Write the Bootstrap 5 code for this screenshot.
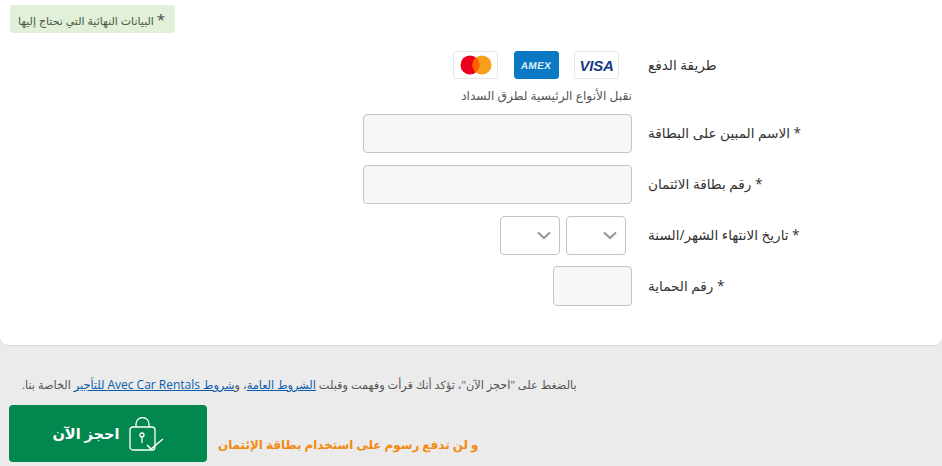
<!DOCTYPE html>
<html lang="ar" dir="rtl">
<head>
<meta charset="utf-8">
<title>الدفع</title>
<link href="https://cdn.jsdelivr.net/npm/bootstrap@5.3.0/dist/css/bootstrap.min.css" rel="stylesheet">
<style>
html,body{height:466px;overflow:hidden}
body{background:#ebebeb;font-family:"Open Sans","DejaVu Sans",sans-serif;color:#444;font-size:13px}
.pay-panel{background:#fff;height:345px;border-radius:0 0 8px 8px;box-shadow:0 1px 1px #d8d8d8;padding-top:5px}
.note-tag{background:#e2efd9;color:#4a5a40;font-size:11px;line-height:28px;height:28px;width:165px;border-radius:3px;margin-right:767px;padding-right:10px;white-space:nowrap}
.note-tag b{font-size:15px;font-weight:400;color:#444}
.form-line{display:flex;align-items:center;margin-bottom:12px}
.line-label{width:294px;text-align:left;font-size:13.6px;font-weight:400;color:#333;flex:none;margin:0 0 0 16px;white-space:nowrap}
.line-field{width:269px;flex:none}
.brand-row{height:28px;margin-top:18px;margin-bottom:0}
.brands{display:flex;gap:15px;padding-right:13px}
.brand{width:45px;height:28px;border:1px solid #e6e6e6;border-radius:3px;background:#fff;display:flex;align-items:center;justify-content:center;flex:none}
.brand:last-child{margin-right:1px}
.brand.amex{background:#0a78c2;border-color:#0a78c2}
.visa-word{font:italic 700 15px "Liberation Sans",sans-serif;color:#1a3a80;letter-spacing:-.2px}
.amex-word{font:700 10px "Liberation Sans",sans-serif;color:#dff0fb;letter-spacing:.3px;transform:skewX(-8deg)}
.brand-hint{font-size:12.2px;color:#555;width:269px;margin:7px 310px 9px 0;line-height:19px;white-space:nowrap;height:19px}
.plain-input{display:block;width:100%;height:39px;background:#f7f7f7;border:1px solid #c4c4c4;border-radius:4px;padding:0 8px}
.plain-input.short{width:79px;height:40px}
.pick-line{margin-bottom:11px}
.pick-pair{display:flex;gap:6px;padding-right:6px}
.month-pick,.year-pick{height:39px;width:60px;border:1px solid #c4c4c4;border-radius:4px;background:#fff;display:flex;align-items:center;justify-content:flex-start;padding-right:8px}
.lower{padding:32px 0 0}
.terms-line{font-size:11.3px;color:#555;margin:0;text-align:left;padding-left:22px;line-height:15px;white-space:nowrap;height:15px}
.terms-line a{color:#0b5cad}
.latin-name{font-size:12px}
.book-row{display:flex;flex-direction:row-reverse;justify-content:flex-start;align-items:flex-end;padding-left:9px;margin-top:13px;gap:11px}
.book-btn{width:198px;height:57px;background:#02874f;color:#fff;border:0;border-radius:4px;font-size:14.6px;font-weight:700;display:flex;align-items:center;justify-content:center;gap:9px;padding:0}
.no-fee{color:#f28a10;font-size:11.9px;font-weight:700;white-space:nowrap;margin-bottom:8px}
</style>
</head>
<body>
<section class="pay-panel">
  <div class="note-tag"><b>*</b> البيانات النهائية التي نحتاج إليها</div>
  <div class="form-line brand-row">
    <div class="line-label">طريقة الدفع</div>
    <div class="line-field">
      <div class="brands">
        <div class="brand"><span class="visa-word" dir="ltr">VISA</span></div>
        <div class="brand amex"><span class="amex-word" dir="ltr">AMEX</span></div>
        <div class="brand">
          <svg width="32" height="20" viewBox="0 0 32 20"><circle cx="10" cy="10" r="9.5" fill="#eb001b"/><circle cx="22" cy="10" r="9.5" fill="#f79e1b"/><path d="M16 2.6a9.5 9.5 0 0 1 0 14.8a9.5 9.5 0 0 1 0-14.8z" fill="#ff5f00"/></svg>
        </div>
      </div>
    </div>
  </div>
  <p class="brand-hint">نقبل الأنواع الرئيسية لطرق السداد</p>
  <div class="form-line">
    <label class="line-label">* الاسم المبين على البطاقة</label>
    <div class="line-field"><input class="plain-input" type="text" aria-label="الاسم"></div>
  </div>
  <div class="form-line">
    <label class="line-label">* رقم بطاقة الائتمان</label>
    <div class="line-field"><input class="plain-input" type="text" aria-label="رقم"></div>
  </div>
  <div class="form-line pick-line">
    <label class="line-label">* تاريخ الانتهاء الشهر/السنة</label>
    <div class="line-field">
      <div class="pick-pair">
        <div class="month-pick"><svg width="14" height="9" viewBox="0 0 14 9"><path d="M1 1.5 7 7l6-5.5" fill="none" stroke="#999" stroke-width="2.2"/></svg></div>
        <div class="year-pick"><svg width="14" height="9" viewBox="0 0 14 9"><path d="M1 1.5 7 7l6-5.5" fill="none" stroke="#999" stroke-width="2.2"/></svg></div>
      </div>
    </div>
  </div>
  <div class="form-line">
    <label class="line-label">* رقم الحماية</label>
    <div class="line-field"><input class="plain-input short" type="text" aria-label="رقم الحماية"></div>
  </div>
</section>
<section class="lower">
  <p class="terms-line">بالضغط على "احجز الآن"، تؤكد أنك قرأت وفهمت وقبلت <a href="#">الشروط العامة</a>، و<a href="#">شروط <span class="latin-name">Avec Car Rentals</span> للتأجير</a> الخاصة بنا.</p>
  <div class="book-row">
    <button class="book-btn" type="button">
      <svg width="35" height="34" viewBox="0 0 35 34" fill="none" stroke="#fff" stroke-width="1.3"><rect x="1" y="10" width="25" height="23" rx="3"/><path d="M7 10V7a6.500 6.500 0 0 1 13 0v3"/><circle cx="13" cy="18" r="2"/><path d="M13 20v6"/><path d="M18 28l4 4 12-10" stroke-width="1.5"/></svg>
      <span>احجز الآن</span>
    </button>
    <div class="no-fee">و لن تدفع رسوم على استخدام بطاقة الإئتمان</div>
  </div>
</section>
<script src="https://cdn.jsdelivr.net/npm/bootstrap@5.3.0/dist/js/bootstrap.bundle.min.js"></script>
</body>
</html>
